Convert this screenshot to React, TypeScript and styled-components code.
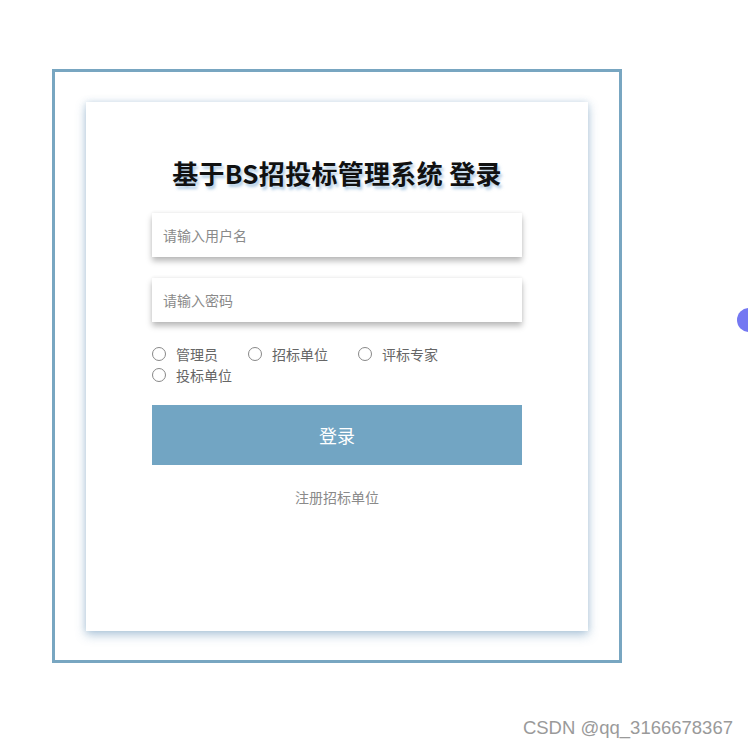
import styled, { createGlobalStyle } from "styled-components";

const GlobalStyle = createGlobalStyle`
    html, body {
        margin: 0;
        padding: 0;
        background: #ffffff;
        font-family: "Noto Sans CJK SC", "Noto Sans", sans-serif;
    }
`;

const roles = ["管理员", "招标单位", "评标专家", "投标单位"];

const App = () => {
    return (
        <>
            <GlobalStyle />
            <Page>
                <Frame>
                    <Card>
                        <Title>基于BS招投标管理系统 登录</Title>
                        <Form onSubmit={(e) => e.preventDefault()}>
                            <Input name="username" type="text" placeholder="请输入用户名" />
                            <Input name="password" type="password" placeholder="请输入密码" />
                            <RoleGroup>
                                {roles.map((r) => (
                                    <RoleLabel key={r}>
                                        <Radio type="radio" name="role" value={r} />
                                        <span>{r}</span>
                                    </RoleLabel>
                                ))}
                            </RoleGroup>
                            <Button type="submit">登录</Button>
                            <RegisterLink href="#">注册招标单位</RegisterLink>
                        </Form>
                    </Card>
                </Frame>
                <Dot />
                <Watermark>CSDN @qq_3166678367</Watermark>
            </Page>
        </>
    );
};

const Page = styled.div`
    position: relative;
    width: 748px;
    height: 748px;
    overflow: hidden;
    padding: 69px 0 0 52px;
    box-sizing: border-box;
`;

const Frame = styled.div`
    width: 570px;
    height: 594px;
    box-sizing: border-box;
    border: 3px solid #78a6c1;
    padding: 30px 31px 0 31px;
`;

const Card = styled.div`
    width: 502px;
    height: 529px;
    box-sizing: border-box;
    background: #ffffff;
    padding-top: 54px;
    display: flex;
    flex-direction: column;
    align-items: center;
    box-shadow: 0 4px 10px rgba(90, 140, 180, 0.45), 0 0 6px rgba(120, 160, 190, 0.25);
`;

const Title = styled.h1`
    margin: 0 0 23px 0;
    font-size: 26px;
    line-height: 34px;
    font-weight: 700;
    color: #111;
    text-shadow: 2px 3px 3px rgba(110, 160, 205, 0.55);
    letter-spacing: 0.3px;
`;

const Form = styled.form`
    width: 370px;
    display: flex;
    flex-direction: column;
`;

const Input = styled.input`
    height: 44px;
    box-sizing: border-box;
    border: none;
    outline: none;
    background: #fff;
    padding: 0 11px;
    margin-bottom: 21px;
    font-family: inherit;
    font-size: 14px;
    color: #333;
    box-shadow: 0 4px 6px rgba(0, 0, 0, 0.28), 0 -1px 3px rgba(0, 0, 0, 0.05);

    &::placeholder {
        color: #8a8a8a;
    }
`;

const RoleGroup = styled.div`
    display: flex;
    flex-wrap: wrap;
    column-gap: 30px;
    margin-bottom: 20px;
`;

const RoleLabel = styled.label`
    display: flex;
    align-items: center;
    gap: 10px;
    height: 21px;
    font-size: 14px;
    color: #666;
`;

const Radio = styled.input`
    appearance: none;
    margin: 0;
    width: 14px;
    height: 14px;
    box-sizing: border-box;
    border: 1px solid #888;
    border-radius: 50%;
    background: #fff;

    &:checked {
        background: radial-gradient(circle, #73a6c3 40%, #fff 45%);
    }
`;

const Button = styled.button`
    height: 60px;
    border: none;
    background-color: #72a5c3;
    color: #fff;
    font-family: inherit;
    font-size: 18px;
    cursor: pointer;
    margin-bottom: 20px;
`;

const RegisterLink = styled.a`
    align-self: center;
    font-size: 14px;
    line-height: 24px;
    color: #8a8a8a;
    text-decoration: none;
`;

const Dot = styled.div`
    position: absolute;
    left: 737px;
    top: 308px;
    width: 24px;
    height: 24px;
    border-radius: 50%;
    background: #7478f2;
`;

const Watermark = styled.div`
    position: absolute;
    right: 15px;
    top: 717px;
    font-family: "Liberation Sans", Arial, sans-serif;
    font-size: 18.5px;
    color: #9a9a9a;
`;

export default App;
